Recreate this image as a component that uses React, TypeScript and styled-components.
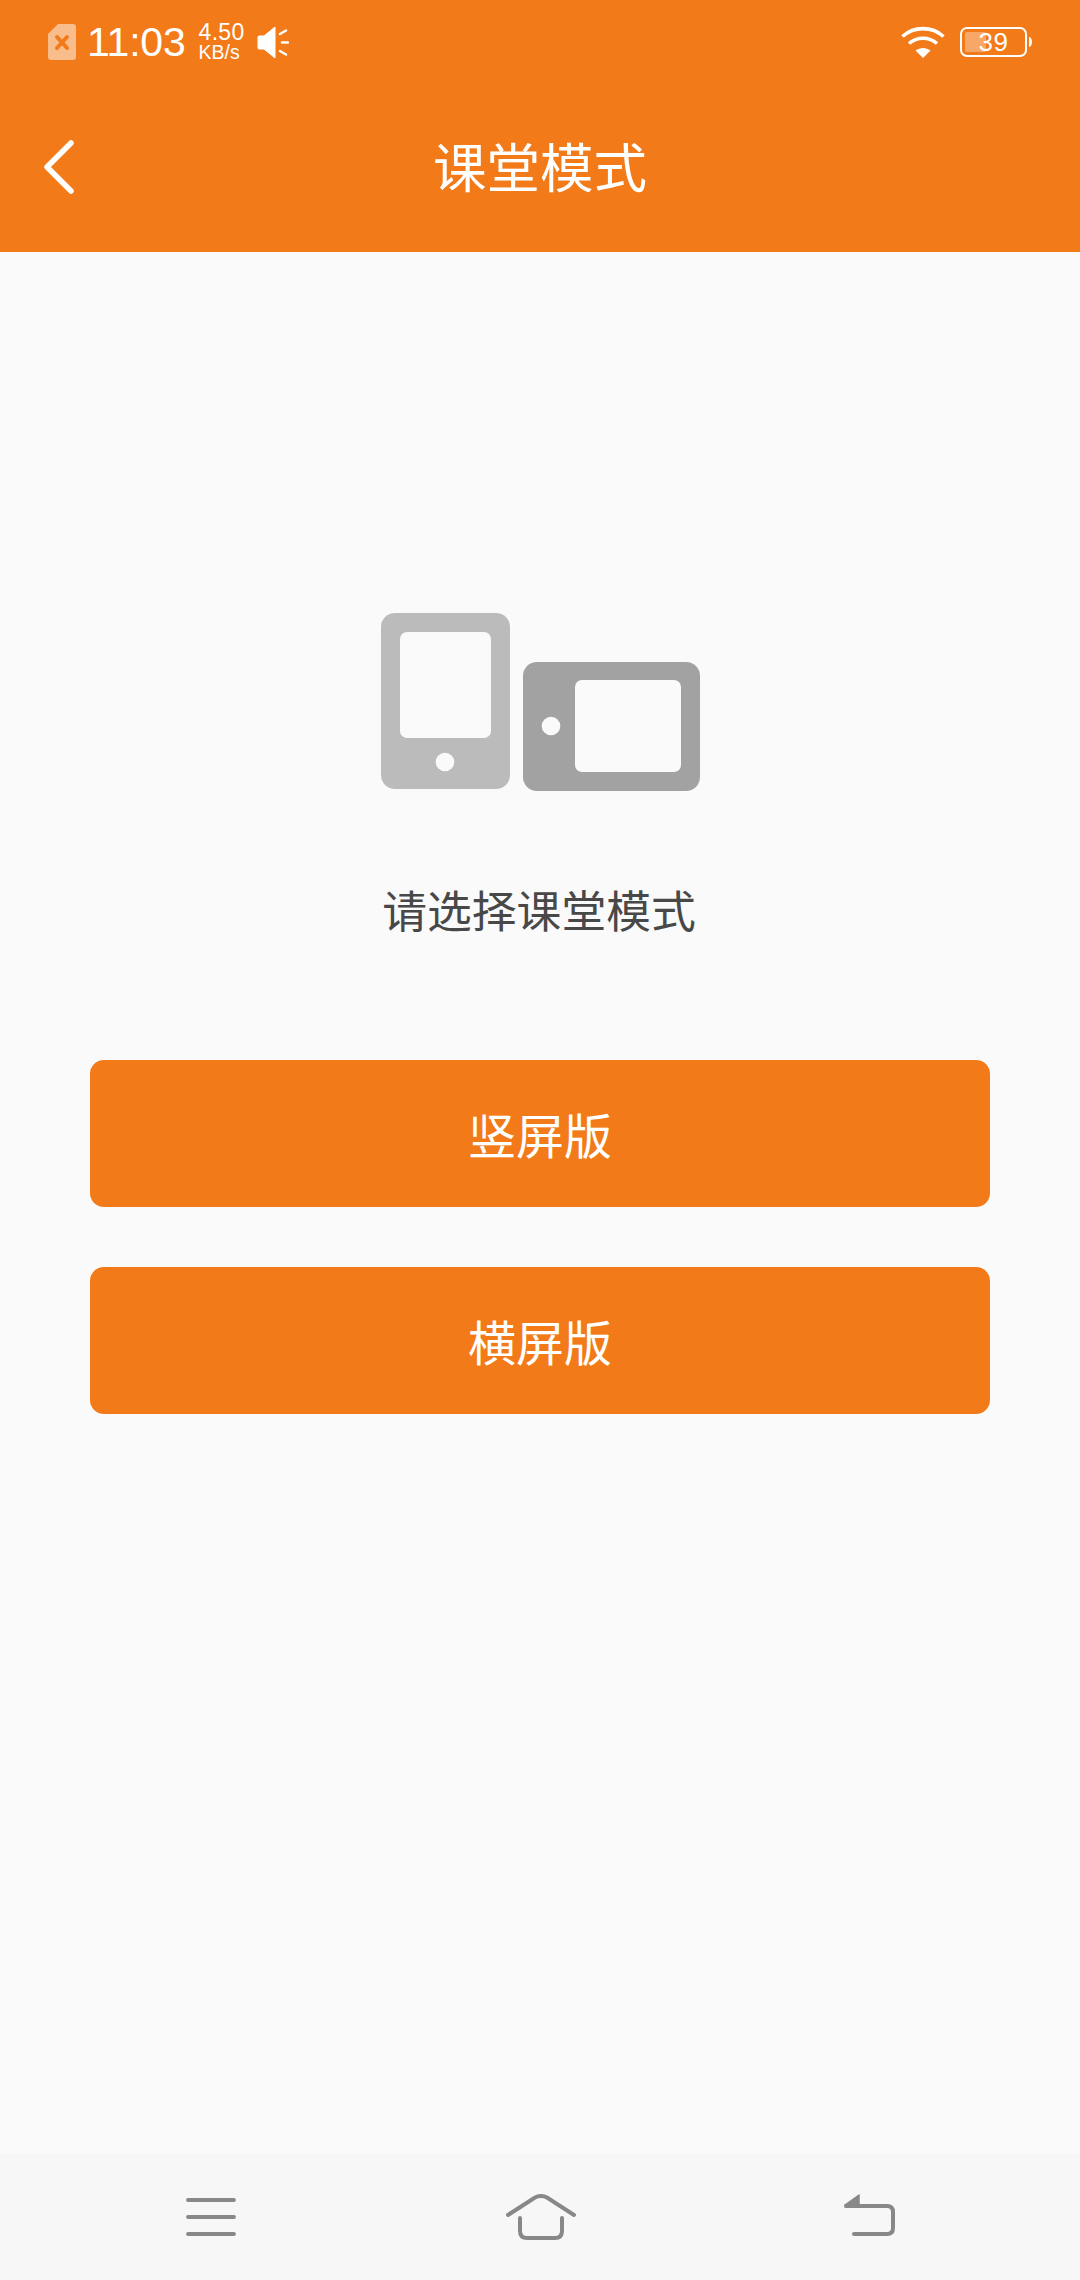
import React from "react";
import styled, { createGlobalStyle } from "styled-components";

const orange = "#f37a19";
const paper = "#fafafa";

const GlobalStyle = createGlobalStyle`
  html, body {
    margin: 0;
    padding: 0;
    background: ${paper};
  }
  * {
    box-sizing: border-box;
  }
`;

const Page = styled.div`
  width: 1080px;
  height: 2280px;
  display: flex;
  flex-direction: column;
  font-family: "Roboto", "Noto Sans CJK SC", sans-serif;
  background: ${paper};
`;

const Header = styled.header`
  height: 252px;
  flex-shrink: 0;
  background: ${orange};
  color: #fff;
`;

const StatusBar = styled.div`
  height: 84px;
  padding: 0 48px;
  display: flex;
  align-items: center;
  justify-content: space-between;
  font-family: "Liberation Sans", sans-serif;
`;

const StatusGroup = styled.div`
  display: flex;
  align-items: center;
`;

const Clock = styled.span`
  margin-left: 11px;
  font-size: 41px;
  line-height: 44px;
  letter-spacing: -0.2px;
`;

const Speed = styled.span`
  margin-left: 13px;
  width: 48px;
  display: flex;
  flex-direction: column;
  align-items: flex-start;
`;

const SpeedValue = styled.span`
  font-size: 23px;
  line-height: 21px;
  letter-spacing: 0.3px;
`;

const SpeedUnit = styled.span`
  font-size: 19.5px;
  line-height: 19px;
`;

const SpeakerIcon = styled.svg`
  margin-left: 10px;
`;

const Battery = styled.div`
  position: relative;
  margin-left: 15px;
  width: 72px;
  height: 30px;
`;

const BatteryLevel = styled.span`
  position: absolute;
  inset: 0 5px 0 0;
  display: flex;
  align-items: center;
  justify-content: center;
  font-size: 26px;
  letter-spacing: 0.5px;
`;

const ToolBar = styled.div`
  position: relative;
  height: 168px;
  padding-top: 4px;
  display: flex;
  align-items: center;
  justify-content: center;
`;

const BackButton = styled.button`
  position: absolute;
  left: 43px;
  top: 56px;
  padding: 0;
  border: 0;
  background: none;
  display: flex;
`;

const Title = styled.h1`
  margin: 0;
  font-size: 53.5px;
  font-weight: 400;
  line-height: 64px;
`;

const Main = styled.main`
  flex: 1;
  padding: 361px 90px 0;
  display: flex;
  flex-direction: column;
  align-items: center;
`;

const DevicesArt = styled.svg`
  display: block;
  margin-left: 2px;
`;

const Prompt = styled.p`
  margin: 91px 2px 0 0;
  font-size: 44.8px;
  line-height: 60px;
  color: #484848;
`;

const ModeList = styled.div`
  width: 100%;
  margin-top: 117px;
  display: flex;
  flex-direction: column;
  gap: 60px;
`;

const ModeButton = styled.button`
  width: 100%;
  height: 147px;
  padding: 0 0 2px;
  border: 0;
  border-radius: 14px;
  background: ${orange};
  color: #fff;
  font: inherit;
  font-size: 48px;
`;

const NavBar = styled.nav`
  position: relative;
  height: 126px;
  flex-shrink: 0;
  background: #f7f7f7;
`;

const NavIcon = styled.svg<{ $left: number; $top: number }>`
  position: absolute;
  left: ${(p) => p.$left}px;
  top: ${(p) => p.$top}px;
`;

function SimIcon() {
  return (
    <svg width="28" height="36" viewBox="0 0 28 36">
      <path
        d="M10 0H25a3 3 0 0 1 3 3V33a3 3 0 0 1-3 3H3a3 3 0 0 1-3-3V10Z"
        fill="#fff"
        fillOpacity=".5"
      />
      <path d="M9 13L19 24M19 13L9 24" stroke={orange} strokeWidth="4" strokeLinecap="round" />
    </svg>
  );
}

function Speaker() {
  return (
    <SpeakerIcon width="32" height="33" viewBox="0 0 32 33">
      <path d="M1 11a1 1 0 0 1 1-1H7L18 1V32L7 23H2a1 1 0 0 1-1-1Z" fill="#fff" stroke="#fff" strokeLinejoin="round" />
      <path
        d="M23 8L29 4.500M25 16.500H31M23 25L29 28.500"
        stroke="#fff"
        strokeWidth="2.500"
        strokeLinecap="round"
      />
    </SpeakerIcon>
  );
}

function Wifi() {
  return (
    <svg width="44" height="32" viewBox="0 0 44 32">
      <g fill="none" stroke="#fff" strokeWidth="3.600">
        <path d="M1.500 10.500C13 0 31 0 42.500 10.500" />
        <path d="M8 17.500C16 10.500 28 10.500 36 17.500" />
      </g>
      <path d="M14.500 24.500C19 21 25 21 29.500 24.500L22 32Z" fill="#fff" />
    </svg>
  );
}

function BatteryShell() {
  return (
    <svg width="72" height="30" viewBox="0 0 72 30">
      <rect x="1" y="1" width="65" height="28" rx="6" fill="none" stroke="#fff" strokeWidth="2" />
      <rect x="5" y="5" width="21" height="20" rx="2" fill="#fff" fillOpacity=".35" />
      <path d="M69 10a3 5 0 0 1 3 5a3 5 0 0 1-3 5Z" fill="#fff" />
    </svg>
  );
}

function DevicesIllustration() {
  return (
    <DevicesArt width="320" height="179" viewBox="0 0 320 179">
      <rect x="0" y="0" width="129" height="176" rx="14" fill="#bbbbbc" />
      <rect x="19" y="19" width="91" height="106" rx="7" fill={paper} />
      <circle cx="64" cy="149" r="9.300" fill={paper} />
      <rect x="142" y="49" width="177" height="129" rx="14" fill="#a2a2a3" />
      <rect x="194" y="67" width="106" height="92" rx="7" fill={paper} />
      <circle cx="170" cy="113" r="9.300" fill={paper} />
    </DevicesArt>
  );
}

export default function App() {
  return (
    <Page>
      <GlobalStyle />
      <Header>
        <StatusBar>
          <StatusGroup>
            <SimIcon />
            <Clock>11:03</Clock>
            <Speed>
              <SpeedValue>4.50</SpeedValue>
              <SpeedUnit>KB/s</SpeedUnit>
            </Speed>
            <Speaker />
          </StatusGroup>
          <StatusGroup>
            <Wifi />
            <Battery>
              <BatteryShell />
              <BatteryLevel>39</BatteryLevel>
            </Battery>
          </StatusGroup>
        </StatusBar>
        <ToolBar>
          <BackButton aria-label="返回">
            <svg width="32" height="54" viewBox="0 0 32 54">
              <path
                d="M28 3L4 27L28 51"
                fill="none"
                stroke="#fff"
                strokeWidth="5.500"
                strokeLinecap="round"
                strokeLinejoin="round"
              />
            </svg>
          </BackButton>
          <Title>课堂模式</Title>
        </ToolBar>
      </Header>
      <Main>
        <DevicesIllustration />
        <Prompt>请选择课堂模式</Prompt>
        <ModeList>
          <ModeButton>竖屏版</ModeButton>
          <ModeButton>横屏版</ModeButton>
        </ModeList>
      </Main>
      <NavBar>
        <NavIcon $left={186} $top={43} width="50" height="40" viewBox="0 0 50 40">
          <path d="M2 3H48M2 20H48M2 37H48" stroke="#888" strokeWidth="3.800" strokeLinecap="round" />
        </NavIcon>
        <NavIcon $left={505} $top={40} width="72" height="46" viewBox="0 0 72 46">
          <path
            d="M3 21L30 3.500Q36 0.500 42 3.500L69 21"
            fill="none"
            stroke="#888"
            strokeWidth="4"
            strokeLinecap="round"
          />
          <path
            d="M15 24V37Q15 44 22 44H50Q57 44 57 37V24"
            fill="none"
            stroke="#888"
            strokeWidth="4"
            strokeLinecap="round"
          />
        </NavIcon>
        <NavIcon $left={843} $top={40} width="56" height="44" viewBox="0 0 56 44">
          <path d="M2 11L16 1V11Z" fill="#888" stroke="#888" strokeWidth="1.500" strokeLinejoin="round" />
          <path
            d="M3 12H44Q50 12 50 18V34Q50 40 44 40H11"
            fill="none"
            stroke="#888"
            strokeWidth="4"
            strokeLinecap="round"
          />
        </NavIcon>
      </NavBar>
    </Page>
  );
}
